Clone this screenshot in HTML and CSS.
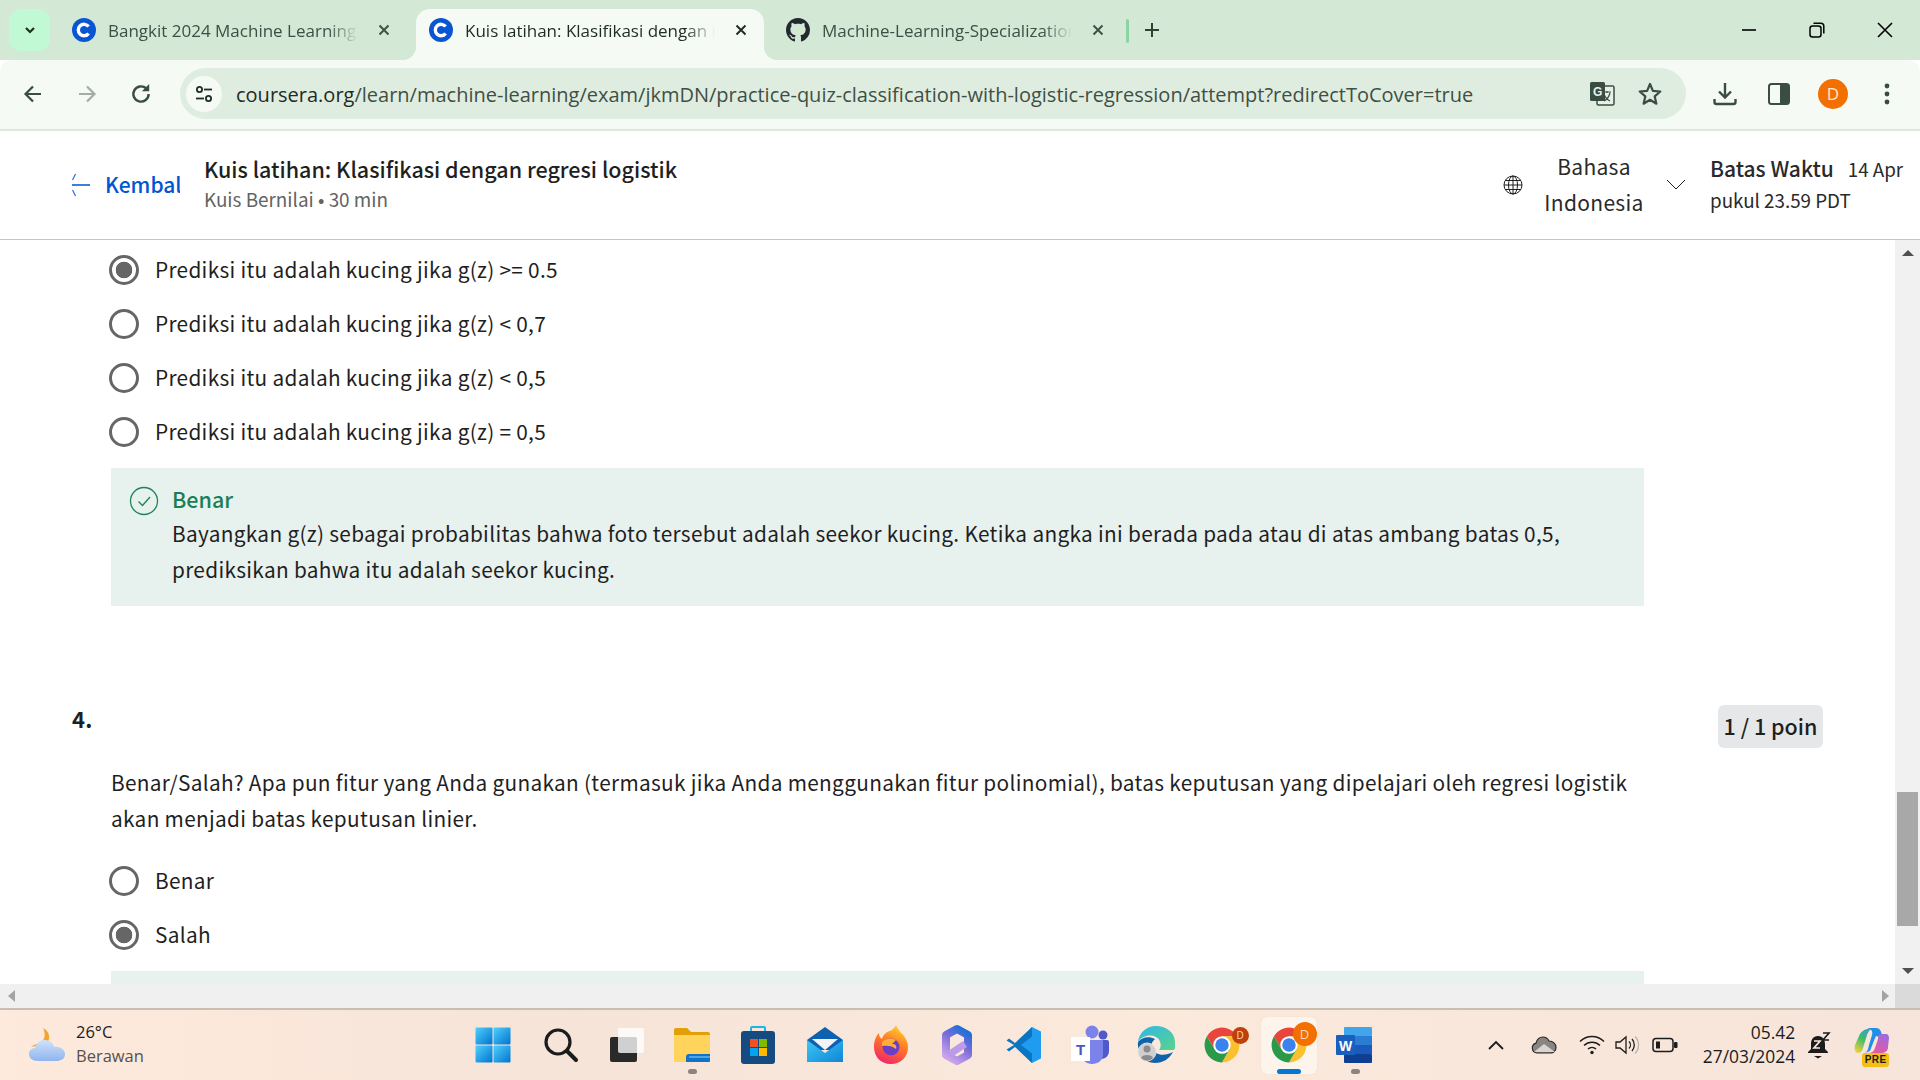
FILE: index.html
```html
<!DOCTYPE html>
<html lang="id">
<head>
<meta charset="utf-8">
<title>Kuis latihan</title>
<link rel="stylesheet" href="styles.css">
</head>
<body>
<svg class="defs" width="0" height="0" aria-hidden="true">
  <defs>
    <symbol id="i-coursera" viewBox="0 0 24 24"><circle cx="12" cy="12" r="12" fill="#0a55d2"/><path d="M16.6 8.6A5.7 5.7 0 1 0 16.6 15.4" fill="none" stroke="#fff" stroke-width="3.4"/></symbol>
    <symbol id="i-x" viewBox="0 0 12 12"><path d="M1.5 1.5l9 9M10.5 1.5l-9 9" fill="none" stroke="currentColor" stroke-width="1.9"/></symbol>
    <symbol id="i-chrome" viewBox="0 0 48 48">
      <path d="M4.95 13A22 22 0 0 1 43.05 13H24L14.47 29.5Z" fill="#e8453c"/>
      <path d="M43.05 13A22 22 0 0 1 24 46L33.53 29.5 24 13Z" fill="#fbc02d"/>
      <path d="M24 46A22 22 0 0 1 4.95 13L14.47 29.5H33.53Z" fill="#2a9a48"/>
      <circle cx="24" cy="24" r="11" fill="#fff"/><circle cx="24" cy="24" r="8.5" fill="#3b82ee"/>
    </symbol>
    <linearGradient id="g-win" x1="0" y1="0" x2="1" y2="1"><stop offset="0" stop-color="#4fd0fb"/><stop offset="1" stop-color="#0273d0"/></linearGradient>
    <linearGradient id="g-mail" x1="0" y1="0" x2="1" y2="1"><stop offset="0" stop-color="#3cc8f7"/><stop offset="1" stop-color="#1085d6"/></linearGradient>
    <linearGradient id="g-fox" x1="0.7" y1="0" x2="0.3" y2="1"><stop offset="0" stop-color="#ffd02e"/><stop offset="0.45" stop-color="#ff7a22"/><stop offset="1" stop-color="#f0246e"/></linearGradient>
    <linearGradient id="g-365" x1="0.8" y1="0" x2="0.3" y2="1"><stop offset="0" stop-color="#1f6fd8"/><stop offset="0.45" stop-color="#7a6ed8"/><stop offset="1" stop-color="#c9a2ea"/></linearGradient>
    <linearGradient id="g-edge" x1="0" y1="0" x2="1" y2="1"><stop offset="0" stop-color="#2fb8e8"/><stop offset="1" stop-color="#5bd38a"/></linearGradient>
    <linearGradient id="g-cloud" x1="0" y1="0" x2="0" y2="1"><stop offset="0" stop-color="#cfe2fb"/><stop offset="1" stop-color="#8fb5ee"/></linearGradient>
    <linearGradient id="g-cop-l" x1="0.8" y1="0" x2="0.2" y2="1"><stop offset="0" stop-color="#2f9fe0"/><stop offset="0.5" stop-color="#3dbb6c"/><stop offset="1" stop-color="#e8d23c"/></linearGradient>
    <linearGradient id="g-cop-r" x1="0.8" y1="0" x2="0.2" y2="1"><stop offset="0" stop-color="#9a6be0"/><stop offset="1" stop-color="#f0569a"/></linearGradient>
  </defs>
</svg>

<div class="tabstrip">
  <button class="tabs-menu"><svg width="14" height="14" viewBox="0 0 14 14"><path d="M3 5l4 4 4-4" fill="none" stroke="#1f2e25" stroke-width="2.2"/></svg></button>
  <div class="tab">
    <svg class="fav"><use href="#i-coursera"/></svg>
    <span class="tab-title">Bangkit 2024 Machine Learning</span>
    <svg class="tab-x"><use href="#i-x"/></svg>
  </div>
  <div class="tab tab-active">
    <svg class="fav"><use href="#i-coursera"/></svg>
    <span class="tab-title">Kuis latihan: Klasifikasi dengan regresi</span>
    <svg class="tab-x"><use href="#i-x"/></svg>
  </div>
  <div class="tab">
    <svg class="fav" viewBox="0 0 16 16"><path fill="#24292f" d="M8 0C3.58 0 0 3.58 0 8c0 3.54 2.29 6.53 5.47 7.59.4.07.55-.17.55-.38 0-.19-.01-.82-.01-1.49-2.01.37-2.53-.49-2.69-.94-.09-.23-.48-.94-.82-1.13-.28-.15-.68-.52-.01-.53.63-.01 1.08.58 1.23.82.72 1.21 1.87.87 2.33.66.07-.52.28-.87.51-1.07-1.78-.2-3.64-.89-3.64-3.95 0-.87.31-1.59.82-2.15-.08-.2-.36-1.02.08-2.12 0 0 .67-.21 2.2.82.64-.18 1.32-.27 2-.27.68 0 1.36.09 2 .27 1.53-1.04 2.2-.82 2.2-.82.44 1.1.16 1.92.08 2.12.51.56.82 1.27.82 2.15 0 3.07-1.87 3.75-3.65 3.95.29.25.54.73.54 1.48 0 1.07-.01 1.93-.01 2.2 0 .21.15.46.55.38A8.013 8.013 0 0016 8c0-4.42-3.58-8-8-8z"/></svg>
    <span class="tab-title">Machine-Learning-Specialization-Coursera</span>
    <svg class="tab-x"><use href="#i-x"/></svg>
  </div>
  <span class="tab-sep"></span>
  <svg class="new-tab" width="16" height="16" viewBox="0 0 16 16"><path d="M8 1v14M1 8h14" stroke="#2f4236" stroke-width="2" fill="none"/></svg>
  <div class="win-ctrls">
    <svg class="win-btn" viewBox="0 0 16 16"><path d="M1 8h14" stroke="#000" stroke-width="1.6"/></svg>
    <svg class="win-btn" viewBox="0 0 16 16"><rect x="1" y="4" width="11" height="11" rx="2.5" fill="none" stroke="#000" stroke-width="1.5"/><path d="M4.5 1.2h7.3a3 3 0 0 1 3 3v7.3" fill="none" stroke="#000" stroke-width="1.5"/></svg>
    <svg class="win-btn" viewBox="0 0 16 16"><path d="M1 1l14 14M15 1L1 15" stroke="#000" stroke-width="1.6"/></svg>
  </div>
</div>

<div class="toolbar">
  <div class="tool-btn"><svg width="22" height="22" viewBox="0 0 22 22"><path d="M19 11H4M11 3.5L3.5 11l7.5 7.5" fill="none" stroke="#3a4d42" stroke-width="2.2"/></svg></div>
  <div class="tool-btn"><svg width="22" height="22" viewBox="0 0 22 22"><path d="M3 11h15M11 3.5l7.5 7.5-7.5 7.5" fill="none" stroke="#a3aca6" stroke-width="2.2"/></svg></div>
  <div class="tool-btn"><svg width="24" height="24" viewBox="0 0 22 22"><path d="M18 11a7 7 0 1 1-2.2-5.1" fill="none" stroke="#3a4d42" stroke-width="2.2"/><path d="M18.5 1.8v6.7h-6.7z" fill="#3a4d42"/></svg></div>
  <div class="omnibox">
    <div class="site-btn"><svg width="20" height="20" viewBox="0 0 20 20" fill="none" stroke="#1f2e25" stroke-width="1.8"><circle cx="5.5" cy="5.5" r="2.6"/><path d="M10 5.5h8"/><circle cx="14.5" cy="14.5" r="2.6"/><path d="M2 14.5h8"/></svg></div>
    <span class="url">coursera.org<span class="url-path">/learn/machine-learning/exam/jkmDN/practice-quiz-classification-with-logistic-regression/attempt?redirectToCover=true</span></span>
    <div class="omni-btn"><svg width="26" height="26" viewBox="0 0 26 26"><rect x="8" y="5" width="17" height="19" rx="1.5" fill="#e8f1e7" stroke="#3a4d42" stroke-width="1.5"/><rect x="1" y="1" width="15" height="19" rx="1.5" fill="#3a4d42"/><text class="tr-g" x="4" y="14.5">G</text><path d="M14 11h8M18 10v2M21 12c-1 4-4 7-6 8M15 13c1 3 4 6 6 7" fill="none" stroke="#3a4d42" stroke-width="1.2"/></svg></div>
    <div class="omni-btn"><svg width="26" height="26" viewBox="0 0 26 26"><path d="M13 3l2.9 6.9 7.4.6-5.6 4.9 1.7 7.3L13 18.8l-6.4 3.9 1.7-7.3-5.6-4.9 7.4-.6z" fill="none" stroke="#3a4d42" stroke-width="2.2" stroke-linejoin="round"/></svg></div>
  </div>
  <div class="tool-btn tool-first"><svg width="26" height="26" viewBox="0 0 26 26" fill="none" stroke="#3a4d42" stroke-width="2.4"><path d="M13 2v14M7 10.5l6 6 6-6"/><path d="M2.5 18v3a2 2 0 0 0 2 2h17a2 2 0 0 0 2-2v-3"/></svg></div>
  <div class="tool-btn"><svg width="24" height="24" viewBox="0 0 24 24"><rect x="2" y="2" width="20" height="20" rx="2.5" fill="none" stroke="#3a4d42" stroke-width="2"/><rect x="13" y="2" width="9" height="20" rx="1.5" fill="#3a4d42"/></svg></div>
  <div class="tool-btn"><span class="avatar">D</span></div>
  <div class="tool-btn"><svg width="8" height="24" viewBox="0 0 8 24" fill="#3a4d42"><circle cx="4" cy="4" r="2.4"/><circle cx="4" cy="12" r="2.4"/><circle cx="4" cy="20" r="2.4"/></svg></div>
</div>

<header class="page-head">
  <a class="back">
    <svg class="back-arrow" width="18" height="26" viewBox="0 0 18 26"><path d="M0 13h18" stroke="#2a6fdc" stroke-width="1.8"/><path d="M3.500 2L0.500 8M0.500 18l3 6" stroke="#2a6fdc" stroke-width="1.2"/></svg>
    <span class="back-label">Kembali</span>
  </a>
  <div class="head-title">
    <div class="title">Kuis latihan: Klasifikasi dengan regresi logistik</div>
    <div class="subtitle">Kuis Bernilai • 30 min</div>
  </div>
  <div class="head-right">
    <svg class="globe" width="20" height="20" viewBox="0 0 20 20" fill="none" stroke="#1f1f1f" stroke-width="1"><circle cx="10" cy="10" r="9"/><ellipse cx="10" cy="10" rx="4.5" ry="9"/><path d="M10 1v18M1 10h18M2.2 5.5h15.6M2.2 14.5h15.6"/></svg>
    <div class="lang">Bahasa<br>Indonesia</div>
    <svg class="chev" width="20" height="12" viewBox="0 0 20 12"><path d="M1 1l9 9 9-9" fill="none" stroke="#1f1f1f" stroke-width="1"/></svg>
    <div class="deadline">
      <div><b>Batas Waktu</b><span class="dl-date">14 Apr</span></div>
      <div class="dl-time">pukul 23.59 PDT</div>
    </div>
  </div>
</header>

<div class="viewport">
  <main class="scroll-content">
    <ul class="options">
      <li class="option"><span class="radio radio-on"></span>Prediksi itu adalah kucing jika g(z) &gt;= 0.5</li>
      <li class="option"><span class="radio"></span>Prediksi itu adalah kucing jika g(z) &lt; 0,7</li>
      <li class="option"><span class="radio"></span>Prediksi itu adalah kucing jika g(z) &lt; 0,5</li>
      <li class="option"><span class="radio"></span>Prediksi itu adalah kucing jika g(z) = 0,5</li>
    </ul>
    <section class="feedback">
      <svg class="check" width="30" height="30" viewBox="0 0 30 30" fill="none" stroke="#1a8558"><circle cx="15" cy="15" r="13.5" stroke-width="1.3"/><path d="M9.5 15.5l4 4 7.5-8.5" stroke-width="1.3"/></svg>
      <div class="fb-body">
        <div class="fb-title">Benar</div>
        <p class="fb-text">Bayangkan g(z) sebagai probabilitas bahwa foto tersebut adalah seekor kucing. Ketika angka ini berada pada atau di atas ambang batas 0,5, prediksikan bahwa itu adalah seekor kucing.</p>
      </div>
    </section>
    <div class="q-head">
      <span class="q-num">4.</span>
      <span class="q-badge">1 / 1 poin</span>
    </div>
    <p class="q-text">Benar/Salah? Apa pun fitur yang Anda gunakan (termasuk jika Anda menggunakan fitur polinomial), batas keputusan yang dipelajari oleh regresi logistik akan menjadi batas keputusan linier.</p>
    <ul class="options options-q">
      <li class="option"><span class="radio"></span>Benar</li>
      <li class="option"><span class="radio radio-on"></span>Salah</li>
    </ul>
    <div class="feedback feedback-next"></div>
  </main>
  <div class="vbar">
    <span class="arrow arrow-up"></span>
    <span class="vtrack"><span class="vthumb"></span></span>
    <span class="arrow arrow-down"></span>
  </div>
</div>
<div class="hbar">
  <span class="arrow arrow-left"></span>
  <span class="arrow arrow-right"></span>
  <span class="corner"></span>
</div>

<footer class="taskbar">
  <div class="weather">
    <svg width="38" height="36" viewBox="0 0 38 36"><path d="M15 1c7 3 8 12 3 16l-15 3c2-2 5-3 9-4 5-3 6-9 3-15z" fill="#f0a52c"/><path d="M10 34c-6 0-9-3-9-7s3-6 6-6c1-5 5-8 10-8s8 3 9 7c5-1 11 2 11 7s-4 7-9 7z" fill="url(#g-cloud)"/></svg>
    <div class="weather-text"><div>26°C</div><div class="weather-sub">Berawan</div></div>
  </div>
  <div class="tb-apps">
    <div class="tb-app"><svg width="36" height="36" viewBox="0 0 36 36" fill="url(#g-win)"><rect x="0.5" y="0.5" width="17" height="17" rx="1"/><rect x="18.5" y="0.5" width="17" height="17" rx="1"/><rect x="0.5" y="18.5" width="17" height="17" rx="1"/><rect x="18.5" y="18.5" width="17" height="17" rx="1"/></svg></div>
    <div class="tb-app tb-search"><svg width="36" height="36" viewBox="0 0 36 36" fill="none" stroke="#1c1c1c" stroke-linecap="round"><circle cx="15" cy="15" r="12" stroke-width="3.2"/><path d="M24 24l9 9" stroke-width="4"/></svg></div>
    <div class="tb-app"><svg width="36" height="36" viewBox="0 0 36 36"><rect x="2" y="10" width="27" height="25" rx="2" fill="#2a2a2a"/><rect x="10" y="1" width="26" height="25" rx="2" fill="#fff" fill-opacity="0.78"/></svg></div>
    <div class="tb-app tb-dot"><svg width="36" height="36" viewBox="0 0 36 36"><path d="M0 3a2 2 0 0 1 2-2h11l4 4h17a2 2 0 0 1 2 2v5H0z" fill="#e2a008"/><path d="M0 8h36v26a1 1 0 0 1-1 1H1a1 1 0 0 1-1-1z" fill="#ffd35c"/><path d="M12 35v-5a3 3 0 0 1 3-3h21v7a1 1 0 0 1-1 1z" fill="#1272c8"/><path d="M15 30h21" stroke="#63b7f0" stroke-width="1.5"/></svg></div>
    <div class="tb-app"><svg width="36" height="40" viewBox="0 0 36 40"><path d="M11 7V3a1 1 0 0 1 1-1h12a1 1 0 0 1 1 1v4" fill="none" stroke="#21b2e8" stroke-width="2"/><rect x="1" y="6" width="34" height="33" rx="3" fill="#164b82"/><rect x="10" y="14" width="8" height="8" fill="#f25022"/><rect x="19" y="14" width="8" height="8" fill="#7fba00"/><rect x="10" y="23" width="8" height="8" fill="#00a4ef"/><rect x="19" y="23" width="8" height="8" fill="#ffb900"/></svg></div>
    <div class="tb-app"><svg width="36" height="36" viewBox="0 0 36 36"><path d="M0 13L18 0l18 13v10H0z" fill="#0d61b0"/><path d="M5 12h26L18 23z" fill="#f2f4f6"/><path d="M0 13l18 13 18-13v22H0z" fill="url(#g-mail)"/></svg></div>
    <div class="tb-app"><svg width="36" height="40" viewBox="0 0 36 40"><path d="M18 39C7 39 1 31 1 22 1 16 3 11 6 8c0 3 1 5 3 6 1-5 6-8 8-8 4-2 5-4 6-6 1 3 3 5 5 8 5 4 7 10 7 14 0 10-7 17-17 17z" fill="url(#g-fox)"/><circle cx="18" cy="22" r="8.5" fill="#6b3fc4"/><path d="M9 17c4-4 10-4 14-2l-4 4c4 0 5 2 4 5-3-3-8-4-14-3z" fill="#ffae3a"/></svg></div>
    <div class="tb-app"><svg width="32" height="42" viewBox="0 0 32 42"><path d="M16 5L27 11V31L16 37 5 31V11Z" fill="none" stroke="url(#g-365)" stroke-width="8" stroke-linejoin="round"/><path d="M24 20L9 30" stroke="#bd9be8" stroke-width="7"/></svg></div>
    <div class="tb-app"><svg width="36" height="38" viewBox="0 0 36 38"><path d="M26 1l9 4.5v27L26 37 10 21z" fill="#1f9cf0"/><path d="M26 1L9 17 3 12.500 0.500 14.500 8 19 0.500 23.500 3 25.500 9 21 26 37V27.500L15 19l11-8.500z" fill="#0a75c2"/></svg></div>
    <div class="tb-app"><svg width="38" height="40" viewBox="0 0 38 40"><circle cx="21" cy="7" r="6.500" fill="#7b83eb"/><circle cx="32" cy="10" r="4.500" fill="#5059c9"/><path d="M27 15h9a2 2 0 0 1 2 2v9c0 5-4 8-8 8z" fill="#5059c9"/><path d="M11 15h21v15c0 5-5 9-11 9s-10-4-10-9z" fill="#7b83eb"/><rect y="12" width="19" height="24" fill="#fff"/><text class="tm-t" x="9.500" y="30">T</text></svg></div>
    <div class="tb-app"><svg width="38" height="40" viewBox="0 0 38 40"><path d="M19 1C9 1 2 8 1 17c4-6 12-8 18-5 5 3 6 9 3 13h15c2-3 1-7 1-8C38 8 30 1 19 1z" fill="url(#g-edge)"/><path d="M1 17c-1 10 6 21 17 21 8 0 14-4 18-11-6 3-12 4-17 1-7-3-6-10-1-14C12 11 5 12 1 17z" fill="#0f63a8"/><circle cx="10" cy="27" r="9" fill="#cfcfcf" stroke="#e8e2dc"/><circle cx="10" cy="24" r="3.500" fill="#8b8b8b"/><path d="M4 33c1-4 11-4 12 0a8 8 0 0 1-12 0z" fill="#8b8b8b"/></svg></div>
    <div class="tb-app tb-badged"><svg class="app-chrome"><use href="#i-chrome"/></svg><span class="chrome-badge badge-dark">D</span></div>
    <div class="tb-app tb-active"><svg class="app-chrome"><use href="#i-chrome"/></svg><span class="chrome-badge badge-orange">D</span></div>
    <div class="tb-app tb-dot"><svg width="38" height="38" viewBox="0 0 38 38"><rect x="8" y="1" width="28" height="9" rx="1" fill="#41a5ee"/><rect x="8" y="10" width="28" height="9" fill="#2b7cd3"/><rect x="8" y="19" width="28" height="9" fill="#185abd"/><rect x="8" y="28" width="28" height="9" rx="1" fill="#103f91"/><rect y="9" width="19" height="20" rx="1" fill="#1a5fbd"/><text class="wd-w" x="9.500" y="25">W</text></svg></div>
  </div>
  <div class="tray">
    <svg class="tray-caret" width="16" height="10" viewBox="0 0 16 10"><path d="M1 9l7-7 7 7" fill="none" stroke="#1c1c1c" stroke-width="1.800"/></svg>
    <svg class="tray-cloud" width="26" height="18" viewBox="0 0 26 18"><path d="M6 17a5 5 0 0 1-1-9.800C6 3 9 1 12 1c3 0 5 2 6 4 4 0 7 3 7 6.500S22 17 20 17z" fill="#8a8583" stroke="#2a2a2a" stroke-width="1.200"/><path d="M3 16l10-8 11 8z" fill="#d9d5d1"/></svg>
    <svg class="tray-wifi" width="26" height="20" viewBox="0 0 26 20" fill="none" stroke="#1c1c1c" stroke-width="1.500"><path d="M1 6.500a17 17 0 0 1 24 0M5 10.500a11.500 11.500 0 0 1 16 0M9 14a6 6 0 0 1 8 0"/><circle cx="13" cy="17.500" r="1.700" fill="#1c1c1c" stroke="none"/></svg>
    <svg class="tray-vol" width="26" height="20" viewBox="0 0 26 20" fill="none" stroke="#1c1c1c" stroke-width="1.300"><path d="M1 7h4l6-5v16l-6-5H1z"/><path d="M14 6.500a5 5 0 0 1 0 7M17 4a9 9 0 0 1 0 12"/><path d="M20 1.500a12 12 0 0 1 0 17" stroke="#b9b3ae"/></svg>
    <svg class="tray-batt" width="26" height="16" viewBox="0 0 26 16"><rect x="1" y="1.500" width="20" height="13" rx="3" fill="none" stroke="#1c1c1c" stroke-width="1.500"/><rect x="4" y="4.500" width="4" height="7" fill="#1c1c1c"/><rect x="22" y="5" width="3.500" height="6" rx="1" fill="#1c1c1c"/></svg>
    <div class="clock"><div>05.42</div><div>27/03/2024</div></div>
    <svg class="tray-bell" width="24" height="28" viewBox="0 0 24 28"><path d="M11 5c-5 0-7 4-7 8v5l-3 3v1h20v-1l-3-3v-5c0-4-2-8-7-8z" fill="#1c1c1c"/><path d="M7 25h8l-4 2.500z" fill="#1c1c1c"/><path d="M7 10h6l-6 7h6" fill="none" stroke="#f8e9de" stroke-width="1.700"/><path d="M16 2h6l-6 7h6" fill="none" stroke="#1c1c1c" stroke-width="1.600"/></svg>
    <div class="copilot">
      <svg width="36" height="30" viewBox="0 0 36 30"><path d="M22 1c-5 0-7 2-9 7L9 21c-1 4-3 5-5 5-3 0-4-4-3-8L5 9c1-3 4-6 8-7z" fill="url(#g-cop-l)"/><path d="M13 1h9c4 0 5 3 6 7l1 3-7-2c-2 4-4 10-6 15l-5 2c3-2 3-4 4-8l3-10c1-3 0-6-5-7z" fill="#1f8fe8"/><path d="M26 7h6c2 0 3 2 3 4l-1 9c0 4-3 6-7 6H14c4 0 6-2 7-5l3-9c0-3 1-5 2-5z" fill="url(#g-cop-r)"/></svg>
      <span class="pre">PRE</span>
    </div>
  </div>
</footer>
</body>
</html>
```
FILE: styles.css
```css
* { box-sizing: border-box; }
html, body { margin: 0; padding: 0; }
body {
  width: 1920px;
  height: 1080px;
  overflow: hidden;
  display: flex;
  flex-direction: column;
  background: #fff;
  color: #1f1f1f;
  font-family: "Noto Sans CJK JP", "Noto Sans", sans-serif;
}
.defs { position: absolute; }
ul { list-style: none; margin: 0; padding: 0; }
p { margin: 0; }
svg { display: block; flex: none; }

/* tab strip */
.tabstrip {
  height: 60px;
  flex: none;
  display: flex;
  align-items: flex-end;
  padding-left: 9px;
  background: #d3e8d5;
  font-family: "Open Sans", "Noto Sans", sans-serif;
}
.tabs-menu {
  width: 41px;
  height: 42px;
  margin: 0 9px 9px 0;
  padding: 0;
  border: 0;
  border-radius: 12px;
  background: #c2f9d5;
  display: flex;
  align-items: center;
  justify-content: center;
}
.tab {
  position: relative;
  width: 348px;
  height: 51px;
  margin-right: 9px;
  padding: 0 17px 9px 13px;
  display: flex;
  align-items: center;
  border-radius: 14px 14px 0 0;
  color: #3f4f45;
}
.tab-active { background: #f5faf4; color: #1f2a24; }
.tab-active::before, .tab-active::after {
  content: "";
  position: absolute;
  bottom: 0;
  width: 14px;
  height: 14px;
}
.tab-active::before { left: -14px; background: radial-gradient(circle at 0 0, transparent 14px, #f5faf4 14.5px); }
.tab-active::after { right: -14px; background: radial-gradient(circle at 100% 0, transparent 14px, #f5faf4 14.5px); }
.fav { width: 24px; height: 24px; }
.tab-title {
  width: 250px;
  margin-left: 12px;
  font-size: 17px;
  white-space: nowrap;
  overflow: hidden;
  -webkit-mask-image: linear-gradient(to right, #000 88%, transparent 100%);
  mask-image: linear-gradient(to right, #000 88%, transparent 100%);
}
.tab-x { width: 12px; height: 12px; margin-left: 20px; }
.tab-sep {
  width: 3px;
  height: 24px;
  margin: 0 0 17px -4px;
  border-radius: 2px;
  background: #8fd3a4;
}
.new-tab { margin: 0 0 22px 15px; }
.win-ctrls {
  margin-left: auto;
  display: flex;
  height: 60px;
  gap: 52px;
  align-items: center;
  padding-right: 27px;
}
.win-btn { width: 16px; height: 16px; }

/* toolbar */
.toolbar {
  height: 71px;
  flex: none;
  display: flex;
  align-items: center;
  padding: 0 6px 2px;
  background: #f5faf4;
  border-radius: 12px 12px 0 0;
  border-bottom: 2px solid #dfe8df;
}
.tool-btn {
  width: 54px;
  height: 51px;
  flex: none;
  display: flex;
  align-items: center;
  justify-content: center;
}
.tool-first { margin-left: 12px; }
.omnibox {
  width: 1506px;
  height: 51px;
  margin-left: 12px;
  padding: 0 12px 0 6px;
  flex: none;
  display: flex;
  align-items: center;
  border-radius: 26px;
  background: #dfede0;
}
.site-btn {
  width: 36px;
  height: 36px;
  border-radius: 50%;
  background: #f5faf4;
  display: flex;
  align-items: center;
  justify-content: center;
  flex: none;
}
.url {
  flex: 1;
  margin-left: 14px;
  padding-top: 1px;
  font-family: "Open Sans", "Noto Sans", sans-serif;
  font-size: 20px;
  color: #1f2a24;
  white-space: nowrap;
}
.url-path { color: #3f4f45; }
.omni-btn {
  width: 48px;
  height: 40px;
  flex: none;
  display: flex;
  align-items: center;
  justify-content: center;
}
.tr-g { font: 700 12px "Liberation Sans", sans-serif; fill: #e8f1e7; }
.avatar {
  width: 30px;
  height: 30px;
  border-radius: 50%;
  background: #f26f00;
  color: #ffe6d0;
  font: 400 17px "Open Sans", sans-serif;
  display: flex;
  align-items: center;
  justify-content: center;
}

/* page header */
.page-head {
  height: 109px;
  flex: none;
  display: flex;
  align-items: center;
  padding: 0 15px 0 72px;
  border-bottom: 1px solid #c4c4c4;
  background: #fff;
}
.back {
  width: 108px;
  flex: none;
  display: flex;
  align-items: center;
  gap: 15px;
  overflow: hidden;
  color: #0056d2;
  font-size: 21px;
  font-weight: 500;
  white-space: nowrap;
}
.back-label { padding-bottom: 2px; }
.head-title { margin-left: 24px; padding-bottom: 2px; }
.title { font-size: 21.5px; font-weight: 500; line-height: 30px; color: #1f1f1f; }
.subtitle { font-size: 18.9px; line-height: 30px; color: #636363; }
.head-right { margin-left: auto; display: flex; align-items: center; }
.globe { margin-right: 16px; }
.lang { width: 110px; padding-bottom: 3px; text-align: center; font-size: 21px; line-height: 36px; letter-spacing: 0.3px; color: #2a2a2a; white-space: nowrap; }
.chev { margin: 0 24px 0 17px; }
.deadline { width: 195px; padding-bottom: 2px; font-size: 18.8px; line-height: 31px; color: #2a2a2a; white-space: nowrap; }
.deadline b { font-size: 21px; font-weight: 500; }
.dl-date { margin-left: 14px; }

/* scrolled content */
.viewport { height: 744px; flex: none; display: flex; overflow: hidden; }
.scroll-content { width: 1895px; flex: none; padding-top: 3px; font-size: 20.8px; letter-spacing: 0.3px; line-height: 36px; color: #1f1f1f; }
.options { padding-left: 109px; }
.option { height: 54px; padding-bottom: 2px; display: flex; align-items: center; gap: 16px; white-space: nowrap; }
.radio {
  width: 30px;
  height: 30px;
  margin-bottom: -2px;
  flex: none;
  border: 3px solid #666;
  border-radius: 50%;
  background: #fff;
}
.radio-on { background: radial-gradient(circle, #666 0 8px, #fff 8.6px); }
.feedback {
  width: 1533px;
  height: 138px;
  margin: 9px 0 0 111px;
  padding: 16px 60px 0 18px;
  display: flex;
  gap: 13px;
  background: #e7f1ee;
}
.check { margin-top: 2px; }
.fb-body { flex: 1; margin-top: -2px; }
.fb-title { color: #1a7f56; font-size: 21.5px; font-weight: 500; line-height: 34px; letter-spacing: 0; }
.fb-text { line-height: 36px; margin-top: -1px; letter-spacing: 0.32px; }
.q-head {
  display: flex;
  justify-content: space-between;
  align-items: flex-start;
  height: 43px;
  margin-top: 99px;
  padding: 0 72px;
}
.q-num { font-size: 22px; font-weight: 700; line-height: 27px; }
.q-badge {
  width: 105px;
  height: 43px;
  border-radius: 6px;
  background: #e6e7e9;
  font-size: 21.5px;
  font-weight: 500;
  letter-spacing: 0;
  line-height: 41px;
  text-align: center;
  white-space: nowrap;
}
.q-text { width: 1560px; margin: 16px 0 1px 111px; letter-spacing: 0.32px; }
.options-q { margin-top: 18px; }
.feedback-next { margin-top: 9px; padding: 0; }

/* scrollbars */
.vbar {
  width: 25px;
  flex: none;
  display: flex;
  flex-direction: column;
  align-items: center;
  background: #f1f1f1;
}
.vtrack { flex: 1; align-self: stretch; padding-top: 536px; padding-left: 2px; display: block; }
.vthumb { display: block; width: 21px; height: 134px; background: #a8a8a8; }
.arrow { width: 0; height: 0; flex: none; border-style: solid; border-color: transparent; }
.arrow-up { margin-top: 10px; border-width: 0 6.5px 6px; border-bottom-color: #505050; }
.arrow-down { margin-bottom: 10px; border-width: 6px 6.5px 0; border-top-color: #505050; }
.hbar {
  height: 24px;
  flex: none;
  display: flex;
  align-items: center;
  padding-left: 8px;
  background: #f0f0f0;
}
.arrow-left { border-width: 6.5px 7px 6.5px 0; border-right-color: #a3a3a3; }
.arrow-right { margin-left: auto; border-width: 6.5px 0 6.5px 7px; border-left-color: #a3a3a3; }
.corner { width: 25px; height: 24px; margin-left: 6px; background: #dadada; }

/* taskbar */
.taskbar {
  height: 72px;
  flex: none;
  display: flex;
  align-items: center;
  border-top: 2px solid #c9bdb4;
  background: linear-gradient(90deg, #fdeadc, #f7e4d9 30%, #fbe9dc 60%, #f7e4da);
  font-family: "Open Sans", "Noto Sans", sans-serif;
  color: #1c1c1c;
}
.weather { width: 428px; padding-left: 28px; flex: none; display: flex; align-items: center; gap: 10px; }
.weather-text { padding-bottom: 2px; font-size: 16.5px; line-height: 24px; }
.weather-sub { color: #57514d; }
.tb-apps { display: flex; align-items: center; margin-left: 32px; }
.tb-app {
  position: relative;
  width: 66.3px;
  height: 57px;
  flex: none;
  display: flex;
  align-items: center;
  justify-content: center;
}
.tb-search { padding-left: 4px; }
.tb-dot::after, .tb-active::after {
  content: "";
  position: absolute;
  left: 50%;
  bottom: 0;
  width: 9px;
  height: 5px;
  margin-left: -4.5px;
  border-radius: 3px;
  background: #8c8480;
}
.tb-active {
  width: 56px;
  margin: 0 5.3px 0 5px;
  border-radius: 6px;
  background: #fdf4ec;
  box-shadow: 0 0 1px #d9cdc4;
}
.tb-active::after { width: 24px; margin-left: -12px; background: #0078d4; }
.app-chrome { width: 38px; height: 38px; }
.chrome-badge {
  position: absolute;
  top: 10px;
  right: 7px;
  width: 17px;
  height: 17px;
  border-radius: 50%;
  color: #ffd9bd;
  font-size: 10px;
  line-height: 17px;
  text-align: center;
}
.badge-dark { background: #c0400a; }
.badge-orange { top: 5px; right: 0; width: 24px; height: 24px; background: #f26f00; font-size: 13px; line-height: 24px; }
.tm-t { font: 700 15px "Liberation Sans", sans-serif; fill: #4b53bc; text-anchor: middle; }
.wd-w { font: 700 14px "Liberation Sans", sans-serif; fill: #fff; text-anchor: middle; }
.tray { flex: 1; display: flex; align-items: center; position: relative; }
.tray-caret { margin-left: 100px; }
.tray-cloud { margin-left: 27px; }
.tray-wifi { margin-left: 22px; }
.tray-vol { margin-left: 10px; }
.tray-batt { margin-left: 11px; }
.clock { width: 105px; margin-left: 12px; padding-bottom: 2px; text-align: right; font-size: 17.4px; line-height: 24px; }
.tray-bell { margin-left: 12px; }
.copilot { position: relative; width: 36px; height: 36px; margin-left: 23px; }
.pre {
  position: absolute;
  left: 8px;
  bottom: -4px;
  width: 27px;
  height: 14px;
  border-radius: 3px;
  background: #f6bd16;
  color: #1c1c1c;
  font: 700 10px/14px "Liberation Sans", sans-serif;
  letter-spacing: 0.5px;
  text-align: center;
}
```
